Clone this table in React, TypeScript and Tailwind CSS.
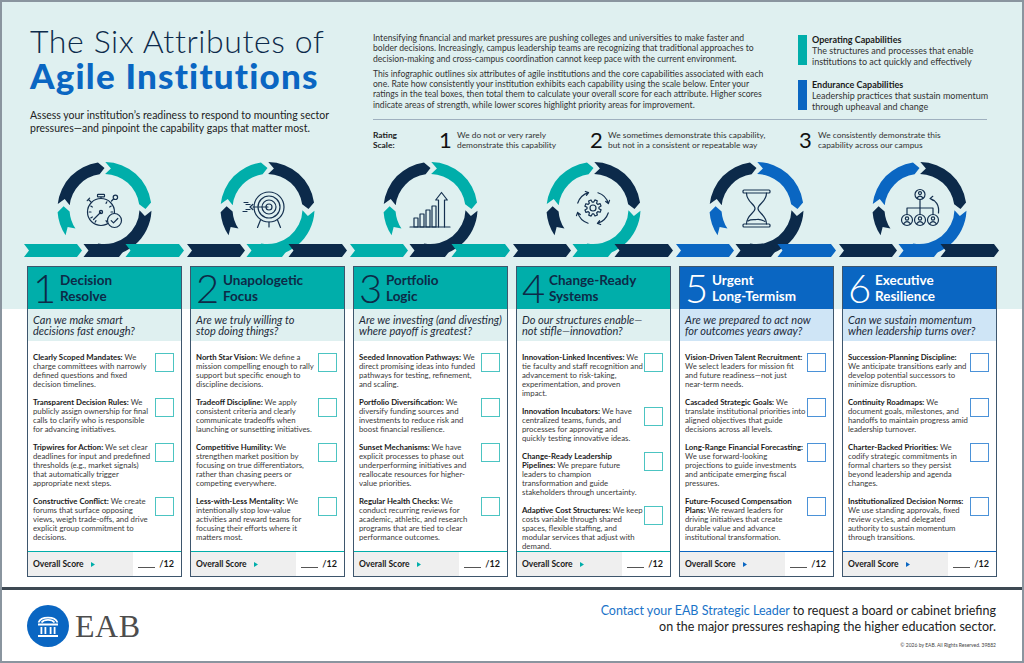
import React from 'react';

type Item = { label: string; text: string };
type Attr = { n: number; title: [string, string]; q: [string, string]; items: Item[]; blue?: boolean };

const ATTRS: Attr[] = [
  {
    n: 1,
    title: ['Decision', 'Resolve'],
    q: ['Can we make smart', 'decisions fast enough?'],
    items: [
      { label: 'Clearly Scoped Mandates:', text: 'We charge committees with narrowly defined questions and fixed decision timelines.' },
      { label: 'Transparent Decision Rules:', text: 'We publicly assign ownership for final calls to clarify who is responsible for advancing initiatives.' },
      { label: 'Tripwires for Action:', text: 'We set clear deadlines for input and predefined thresholds (e.g., market signals) that automatically trigger appropriate next steps.' },
      { label: 'Constructive Conflict:', text: 'We create forums that surface opposing views, weigh trade-offs, and drive explicit group commitment to decisions.' },
    ],
  },
  {
    n: 2,
    title: ['Unapologetic', 'Focus'],
    q: ['Are we truly willing to', 'stop doing things?'],
    items: [
      { label: 'North Star Vision:', text: 'We define a mission compelling enough to rally support but specific enough to discipline decisions.' },
      { label: 'Tradeoff Discipline:', text: 'We apply consistent criteria and clearly communicate tradeoffs when launching or sunsetting initiatives.' },
      { label: 'Competitive Humility:', text: 'We strengthen market position by focusing on true differentiators, rather than chasing peers or competing everywhere.' },
      { label: 'Less-with-Less Mentality:', text: 'We intentionally stop low-value activities and reward teams for focusing their efforts where it matters most.' },
    ],
  },
  {
    n: 3,
    title: ['Portfolio', 'Logic'],
    q: ['Are we investing (and divesting)', 'where payoff is greatest?'],
    items: [
      { label: 'Seeded Innovation Pathways:', text: 'We direct promising ideas into funded pathways for testing, refinement, and scaling.' },
      { label: 'Portfolio Diversification:', text: 'We diversify funding sources and investments to reduce risk and boost financial resilience.' },
      { label: 'Sunset Mechanisms:', text: 'We have explicit processes to phase out underperforming initiatives and reallocate resources for higher-value priorities.' },
      { label: 'Regular Health Checks:', text: 'We conduct recurring reviews for academic, athletic, and research programs that are tied to clear performance outcomes.' },
    ],
  },
  {
    n: 4,
    title: ['Change-Ready', 'Systems'],
    q: ['Do our structures enable\u2014', 'not stifle\u2014innovation?'],
    items: [
      { label: 'Innovation-Linked Incentives:', text: 'We tie faculty and staff recognition and advancement to risk-taking, experimentation, and proven impact.' },
      { label: 'Innovation Incubators:', text: 'We have centralized teams, funds, and processes for approving and quickly testing innovative ideas.' },
      { label: 'Change-Ready Leadership Pipelines:', text: 'We prepare future leaders to champion transformation and guide stakeholders through uncertainty.' },
      { label: 'Adaptive Cost Structures:', text: 'We keep costs variable through shared spaces, flexible staffing, and modular services that adjust with demand.' },
    ],
  },
  {
    n: 5,
    blue: true,
    title: ['Urgent', 'Long-Termism'],
    q: ['Are we prepared to act now', 'for outcomes years away?'],
    items: [
      { label: 'Vision-Driven Talent Recruitment:', text: 'We select leaders for mission fit and future readiness\u2014not just near-term needs.' },
      { label: 'Cascaded Strategic Goals:', text: 'We translate institutional priorities into aligned objectives that guide decisions across all levels.' },
      { label: 'Long-Range Financial Forecasting:', text: 'We use forward-looking projections to guide investments and anticipate emerging fiscal pressures.' },
      { label: 'Future-Focused Compensation Plans:', text: 'We reward leaders for driving initiatives that create durable value and advance institutional transformation.' },
    ],
  },
  {
    n: 6,
    blue: true,
    title: ['Executive', 'Resilience'],
    q: ['Can we sustain momentum', 'when leadership turns over?'],
    items: [
      { label: 'Succession-Planning Discipline:', text: 'We anticipate transitions early and develop potential successors to minimize disruption.' },
      { label: 'Continuity Roadmaps:', text: 'We document goals, milestones, and handoffs to maintain progress amid leadership turnover.' },
      { label: 'Charter-Backed Priorities:', text: 'We codify strategic commitments in formal charters so they persist beyond leadership and agenda changes.' },
      { label: 'Institutionalized Decision Norms:', text: 'We use standing approvals, fixed review cycles, and delegated authority to sustain momentum through transitions.' },
    ],
  },
];

const TEAL = '#00aeaa';
const NAVY = '#0c2a4a';
const BLUE = '#0a66c2';
const INK = '#15304f';

// ring geometry (local coords of a 155px column)
const CX = 77.5;
const CY = 53;
const RO = 47;
const RI = 35;
const RM = 41;

const P = (cx: number, cy: number, r: number, a: number) => {
  const t = (a * Math.PI) / 180;
  return [cx + r * Math.cos(t), cy + r * Math.sin(t)];
};
const s = (p: number[]) => `${p[0].toFixed(2)} ${p[1].toFixed(2)}`;

const arc = (a0: number, a1: number, tip = 8) => {
  const big = a1 - a0 > 180 ? 1 : 0;
  return `M${s(P(CX, CY, RO, a0))} A${RO} ${RO} 0 ${big} 1 ${s(P(CX, CY, RO, a1))} L${s(P(CX, CY, RM, a1 + tip))} L${s(P(CX, CY, RI, a1))} A${RI} ${RI} 0 ${big} 0 ${s(P(CX, CY, RI, a0))} L${s(P(CX, CY, RM, a0 + tip))}Z`;
};

const band = (l: number, r: number, d = 5) =>
  `M${l} 88 L${r} 88 L${r + d} 94.5 L${r} 101 L${l} 101 L${l + d} 94.5Z`;

const gearPts = Array.from({ length: 8 })
  .flatMap((_, k) => {
    const b = k * 45 + 22;
    return [P(77, 52, 6, b - 15), P(77, 52, 8.3, b - 9), P(77, 52, 8.3, b + 9), P(77, 52, 6, b + 15)];
  })
  .map((p) => `${p[0].toFixed(2)},${p[1].toFixed(2)}`)
  .join(' ');

const loopArrows = [0, 90, 180, 270].map((b) => {
  const a0 = b + 18;
  const a1 = b + 74;
  const r = 16;
  const st = P(77, 52, r, a0);
  const en = P(77, 52, r, a1);
  const t = (a1 * Math.PI) / 180;
  const tx = -Math.sin(t);
  const ty = Math.cos(t);
  const bx = en[0] - 2.8 * tx;
  const by = en[1] - 2.8 * ty;
  const w1 = [bx + 2 * Math.cos(t), by + 2 * Math.sin(t)];
  const w2 = [bx - 2 * Math.cos(t), by - 2 * Math.sin(t)];
  return `M${s(st)} A${r} ${r} 0 0 1 ${s(en)} M${s(w1)} L${s(en)} L${s(w2)}`;
});

const Person = ({ cx, cy, r }: { cx: number; cy: number; r: number }) => (
  <g>
    <circle cx={cx} cy={cy} r={r} />
    <circle cx={cx} cy={cy - r * 0.28} r={r * 0.3} />
    <path d={`M${cx - r * 0.6} ${cy + r * 0.68} q${r * 0.6} -${r * 0.75} ${r * 1.2} 0`} />
  </g>
);

const Icon = ({ n }: { n: number }) => {
  if (n === 1)
    return (
      <g>
        <circle cx="74" cy="56" r="13.5" />
        <rect x="70.5" y="38.3" width="7" height="2.6" rx="0.6" />
        <path d="M74 41v1.5M61.5 43.5l2.6 2.6M60.2 44.6l2.4-2.4M86.5 43l-2 2" />
        <circle cx="88.4" cy="41.3" r="2.2" />
        {[-60, -30, 0, 30, 60, 120, 150, 180, 210].map((a) => {
          const p0 = P(74, 56, 10, a);
          const p1 = P(74, 56, 11.8, a);
          return <path key={a} d={`M${s(p0)} L${s(p1)}`} />;
        })}
        <path d="M74 56L66.5 63.5" />
        <circle cx="74" cy="56" r="1.6" />
        <circle cx="87.5" cy="64.5" r="7" fill="#dff0f0" />
        <path d="M84.2 64.6l2.3 2.3l4.3-4.4" />
      </g>
    );
  if (n === 2)
    return (
      <g>
        <circle cx="79" cy="51" r="15" />
        <circle cx="79" cy="51" r="11" />
        <circle cx="79" cy="51" r="7" />
        <circle cx="79" cy="51" r="3" />
        <path d="M63 51h15M63 48.3l-3 2.7l3 2.7M60 48.5h-4M60 53.5h-4M54 46.5h4M53 55.5h4M70.5 64l-3 7.5M87.5 64l3 7.5M79 66v5" />
      </g>
    );
  if (n === 3)
    return (
      <g>
        <path d="M57 71h40" />
        <rect x="61" y="62" width="4" height="9" />
        <rect x="67" y="58" width="4" height="13" />
        <rect x="73" y="54" width="4" height="17" />
        <rect x="79" y="50" width="4" height="21" />
        <path d="M85.5 71V44h-2.8l5.8-7.5l5.8 7.5h-2.8V71" />
      </g>
    );
  if (n === 4)
    return (
      <g>
        <polygon points={gearPts} />
        <circle cx="77" cy="52" r="3" />
        {loopArrows.map((d, i) => (
          <path key={i} d={d} />
        ))}
      </g>
    );
  if (n === 5)
    return (
      <g>
        <rect x="64" y="34" width="27" height="3" rx="1" />
        <rect x="64" y="68" width="27" height="3" rx="1" />
        <path d="M67.5 37c0 9 8.5 11 8.5 15.5s-8.5 6.5-8.5 15.5M87.5 37c0 9-8.5 11-8.5 15.5s8.5 6.5 8.5 15.5" />
        <path d="M69 65c3-2 6-1 8.5-1.5s6 0.5 8.5 2" />
      </g>
    );
  return (
    <g>
      <Person cx={78} cy={38.5} r={5} />
      <path d="M78 43.5V52M65 58.5V52h26v6.5M78 52v6.5" />
      <Person cx={65} cy={64} r={5.5} />
      <Person cx={78} cy={64} r={5.5} />
      <Person cx={91} cy={64} r={5.5} />
      <path d="M96.5 57c1-8-3-13-8-14.5M90.8 40.3L88 42.6l3.2 2" />
    </g>
  );
};

const RING: [string, string][] = [
  [TEAL, NAVY],
  [NAVY, TEAL],
  [TEAL, NAVY],
  [NAVY, TEAL],
  [BLUE, NAVY],
  [NAVY, BLUE],
];

const Ring = ({ i }: { i: number }) => {
  const [a, b] = RING[i];
  return (
    <svg width="155" height="104" viewBox="0 0 155 104" className="overflow-visible block">
      <path d={arc(146, 176)} fill={a} />
      <path d={arc(186, 262)} fill={b} />
      <path d={arc(271, 352)} fill={a} />
      <path d={arc(2, 100)} fill={b} />
      <path d={band(-3, 50)} fill={a} />
      <path d={band(56.5, 92)} fill={b} />
      <path d={band(98.5, 152)} fill={a} />
      <g fill="none" stroke={INK} strokeWidth="1.2" strokeLinecap="round" strokeLinejoin="round">
        <Icon n={i + 1} />
      </g>
    </svg>
  );
};

const Card = ({ a }: { a: Attr }) => {
  const blue = !!a.blue;
  return (
    <div className="h-[311px] border border-[#3e566d] bg-white flex flex-col">
      <div
        className={`h-[42px] shrink-0 flex items-center pl-[5px] ${
          blue ? 'bg-[#0a66c2] text-white' : 'bg-[#00aeaa] text-[#0d2a47]'
        }`}
      >
        <span className="w-[27px] text-[40px] font-light leading-none">{a.n}</span>
        <span className="text-[13.5px] font-bold leading-[16px]">
          {a.title[0]}
          <br />
          {a.title[1]}
        </span>
      </div>
      <div
        className={`h-[32px] shrink-0 flex items-center px-[5px] italic text-[11px] leading-[11px] text-[#1d2b3a] ${
          blue ? 'bg-[#cfe5f6]' : 'bg-[#dff0f0]'
        }`}
      >
        <p>
          {a.q[0]}
          <br />
          {a.q[1]}
        </p>
      </div>
      <div className="flex-1 min-h-0 overflow-hidden flex flex-col gap-[9px] pt-[12px] pl-[5px] pr-[7px]">
        {a.items.map((it) => (
          <div key={it.label} className="flex justify-between items-start">
            <p className="w-[121px] text-[7.8px] leading-[9px] text-[#3a3a3a]">
              <span className="font-bold text-[#1a1a1a]">{it.label}</span> {it.text}
            </p>
            <div
              className={`w-[19px] h-[19px] shrink-0 border-[1.5px] ${
                blue ? 'border-[#4b92d8]' : 'border-[#4cc4c2]'
              }`}
            />
          </div>
        ))}
      </div>
      <div className={`h-[25px] shrink-0 flex border-t-[1.5px] ${blue ? 'border-[#0a66c2]' : 'border-[#00aeaa]'}`}>
        <div className="w-[105px] bg-[#efefef] flex items-center pl-[5px] gap-[7px]">
          <span className="text-[8.5px] font-bold text-[#1a1a1a]">Overall Score</span>
          <svg width="4" height="5" viewBox="0 0 4 5">
            <polygon points="0,0 4,2.5 0,5" fill={blue ? BLUE : TEAL} />
          </svg>
        </div>
        <div className="flex-1 flex items-center justify-end pr-[7px] gap-[4px]">
          <span className="w-[17px] h-[7px] border-b border-[#555]" />
          <span className="text-[9px] font-bold text-[#1a1a1a]">/12</span>
        </div>
      </div>
    </div>
  );
};

const Logo = () => (
  <svg width="42" height="42" viewBox="0 0 42 42">
    <circle cx="21" cy="21" r="21" fill={BLUE} />
    <g fill="none" stroke="#fff" strokeWidth="1.7">
      <path d="M11.5 17.5C14 11 28 11 30.5 17.5" />
      <path d="M14.5 17.5C17 14 25 14 27.5 17.5" />
    </g>
    <g fill="#fff">
      <rect x="11" y="18.5" width="20" height="2" />
      <rect x="13.5" y="22" width="1.8" height="7" />
      <rect x="17.5" y="22" width="1.8" height="7" />
      <rect x="22.7" y="22" width="1.8" height="7" />
      <rect x="26.7" y="22" width="1.8" height="7" />
      <rect x="11" y="30" width="20" height="2" />
    </g>
  </svg>
);

export default function App() {
  return (
    <div className="w-[1024px] h-[663px] border-2 border-[#8a959f] flex flex-col font-['Lato',sans-serif] bg-[linear-gradient(to_bottom,#dff0f0_307px,#ffffff_307px)] overflow-hidden">
      <header className="h-[154px] shrink-0 flex items-start pl-[28px] pt-[21px]">
        <div className="w-[343px] shrink-0">
          <h1 className="text-[32px] leading-[35px] font-light text-[#0d2b4b] tracking-[0.6px]">The Six Attributes of</h1>
          <h1 className="text-[35px] leading-[35px] font-black text-[#0a66c2] tracking-[1.2px]">Agile Institutions</h1>
          <p className="mt-[16px] text-[10.5px] leading-[12.5px] text-[#222]">
            Assess your institution&rsquo;s readiness to respond to mounting sector
            <br />
            pressures&mdash;and pinpoint the capability gaps that matter most.
          </p>
        </div>
        <div className="w-[614px] mt-[10px]">
          <div className="flex">
            <div className="w-[400px] shrink-0 text-[8.6px] leading-[10.3px] text-[#333] whitespace-nowrap">
              <p>
                Intensifying financial and market pressures are pushing colleges and universities to make faster and
                <br />
                bolder decisions. Increasingly, campus leadership teams are recognizing that traditional approaches to
                <br />
                decision-making and cross-campus coordination cannot keep pace with the current environment.
              </p>
              <p className="mt-[5px]">
                This infographic outlines six attributes of agile institutions and the core capabilities associated with each
                <br />
                one. Rate how consistently your institution exhibits each capability using the scale below. Enter your
                <br />
                ratings in the teal boxes, then total them to calculate your overall score for each attribute. Higher scores
                <br />
                indicate areas of strength, while lower scores highlight priority areas for improvement.
              </p>
            </div>
            <div className="ml-[25px] mt-[1px] flex flex-col gap-[12px] text-[9px] leading-[11px] text-[#333] whitespace-nowrap">
              <div className="flex gap-[5px]">
                <div className="w-[9px] h-[30px] mt-[1px] bg-[#00aeaa] shrink-0" />
                <div>
                  <p className="font-bold text-[#1a1a1a]">Operating Capabilities</p>
                  <p>
                    The structures and processes that enable
                    <br />
                    institutions to act quickly and effectively
                  </p>
                </div>
              </div>
              <div className="flex gap-[5px]">
                <div className="w-[9px] h-[30px] mt-[1px] bg-[#0a66c2] shrink-0" />
                <div>
                  <p className="font-bold text-[#1a1a1a]">Endurance Capabilities</p>
                  <p>
                    Leadership practices that sustain momentum
                    <br />
                    through upheaval and change
                  </p>
                </div>
              </div>
            </div>
          </div>
          <div className="h-px bg-[#9fb0bf] mt-[7px]" />
          <div className="flex items-center mt-[9px] text-[8.4px] leading-[10px] text-[#333]">
            <p className="w-[66px] font-bold text-[#1a1a1a]">
              Rating
              <br />
              Scale:
            </p>
            <div className="w-[151px] flex items-center">
              <span className="w-[18px] text-[22px] leading-none text-[#111]">1</span>
              <p>
                We do not or very rarely
                <br />
                demonstrate this capability
              </p>
            </div>
            <div className="w-[209px] flex items-center">
              <span className="w-[18px] text-[22px] leading-none text-[#111]">2</span>
              <p>
                We sometimes demonstrate this capability,
                <br />
                but not in a consistent or repeatable way
              </p>
            </div>
            <div className="flex items-center">
              <span className="w-[19px] text-[22px] leading-none text-[#111]">3</span>
              <p>
                We consistently demonstrate this
                <br />
                capability across our campus
              </p>
            </div>
          </div>
        </div>
      </header>

      <div className="h-[104px] shrink-0 ml-[25px] grid grid-cols-[repeat(6,155px)] gap-x-2">
        {ATTRS.map((a, i) => (
          <Ring key={a.n} i={i} />
        ))}
      </div>

      <div className="mt-[6px] ml-[25px] grid grid-cols-[repeat(6,155px)] gap-x-2">
        {ATTRS.map((a) => (
          <Card key={a.n} a={a} />
        ))}
      </div>

      <footer className="mt-[10px] flex-1 border-t-[3px] border-[#3e4953] flex items-center justify-between pl-[25px] pr-[26px]">
        <div className="flex items-center gap-[6px]">
          <Logo />
          <span className="font-['Liberation_Serif',serif] text-[32px] leading-none text-[#4d4d4d] tracking-[0.5px]">EAB</span>
        </div>
        <div className="text-right">
          <p className="text-[12.5px] leading-[16px] text-[#222]">
            <span className="text-[#1a73c8]">Contact your EAB Strategic Leader</span> to request a board or cabinet briefing
            <br />
            on the major pressures reshaping the higher education sector.
          </p>
          <p className="mt-[7px] text-[5px] leading-[6px] text-[#444]">&copy; 2026 by EAB. All Rights Reserved. 39882</p>
        </div>
      </footer>
    </div>
  );
}
